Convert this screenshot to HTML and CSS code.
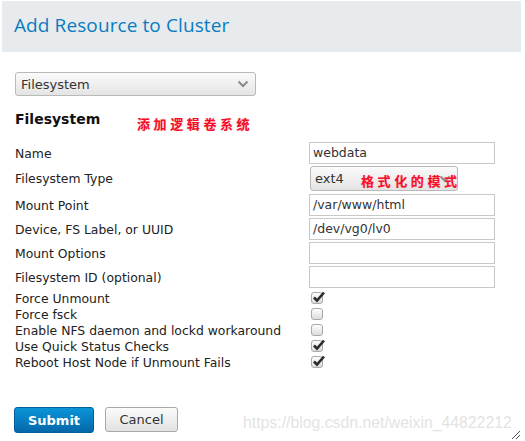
FILE: index.html
```html
<!DOCTYPE html>
<html>
<head>
<meta charset="utf-8">
<link rel="stylesheet" href="styles.css">
</head>
<body>
<div class="header"><h1 class="title">Add Resource to Cluster</h1></div>
<div class="content">
  <div class="select type-select">
    <span>Filesystem</span>
    <svg class="chev" width="12" height="8" viewBox="0 0 12 8"><path d="M1.5 1.5 L6 6 L10.5 1.5" fill="none" stroke="#8a8a8a" stroke-width="2"/></svg>
  </div>
  <div class="section">
    <h2 class="section-title">Filesystem</h2>
    <span class="note note1">添加逻辑卷系统</span>
  </div>
  <div class="form">
    <div class="row"><label>Name</label><div class="input">webdata</div></div>
    <div class="row row-select"><label>Filesystem Type</label>
      <div class="select fs-select"><span>ext4</span>
        <svg class="chev" width="12" height="8" viewBox="0 0 12 8"><path d="M1.5 1.5 L6 6 L10.5 1.5" fill="none" stroke="#8a8a8a" stroke-width="2"/></svg>
        <span class="note note2">格式化的模式</span>
      </div>
    </div>
    <div class="row"><label>Mount Point</label><div class="input">/var/www/html</div></div>
    <div class="row"><label>Device, FS Label, or UUID</label><div class="input">/dev/vg0/lv0</div></div>
    <div class="row"><label>Mount Options</label><div class="input"></div></div>
    <div class="row"><label>Filesystem ID (optional)</label><div class="input"></div></div>
    <div class="crow"><label>Force Unmount</label><span class="cb checked"><svg width="16" height="16" viewBox="0 0 16 16"><path d="M3 7.5 L6 10.5 L13 2.5" fill="none" stroke="#2b2b2b" stroke-width="2.6"/></svg></span></div>
    <div class="crow"><label>Force fsck</label><span class="cb"></span></div>
    <div class="crow"><label>Enable NFS daemon and lockd workaround</label><span class="cb"></span></div>
    <div class="crow"><label>Use Quick Status Checks</label><span class="cb checked"><svg width="16" height="16" viewBox="0 0 16 16"><path d="M3 7.5 L6 10.5 L13 2.5" fill="none" stroke="#2b2b2b" stroke-width="2.6"/></svg></span></div>
    <div class="crow"><label>Reboot Host Node if Unmount Fails</label><span class="cb checked"><svg width="16" height="16" viewBox="0 0 16 16"><path d="M3 7.5 L6 10.5 L13 2.5" fill="none" stroke="#2b2b2b" stroke-width="2.6"/></svg></span></div>
  </div>
  <div class="actions">
    <button class="btn submit">Submit</button>
    <button class="btn cancel">Cancel</button>
  </div>
</div>
<div class="watermark">https://blog.csdn.net/weixin_44822212</div>
<svg class="grip" width="12" height="12" viewBox="0 0 12 12"><path d="M11 3 L3 11 M11 7 L7 11" stroke="#555" stroke-width="1"/></svg>
</body>
</html>
```
FILE: styles.css
```css
html, body {
  margin: 0;
  padding: 0;
  background: #fff;
  font-family: "DejaVu Sans", sans-serif;
  color: #222;
}
body {
  position: relative;
  width: 525px;
  height: 441px;
  overflow: hidden;
}
.header {
  margin: 1px 4px 0 2px;
  height: 51px;
  background: #e8ebee;
  display: flex;
  align-items: center;
}
.title {
  margin: 0 0 3px 12px;
  font-family: "Open Sans", sans-serif;
  font-weight: 500;
  font-size: 19px;
  color: #0b7bc0;
  letter-spacing: 0.1px;
}
.content {
  padding-left: 15px;
}
.select {
  position: relative;
  box-sizing: border-box;
  border: 1px solid #b9b9b9;
  border-radius: 3px;
  background: linear-gradient(#fbfbfb, #e4e4e4);
  display: flex;
  align-items: center;
  font-size: 13px;
  color: #333;
}
.select .chev {
  position: absolute;
  right: 6px;
  top: 50%;
  margin-top: -4px;
}
.type-select {
  margin-top: 20px;
  width: 241px;
  height: 24px;
  padding-left: 5px;
}
.section {
  position: relative;
  margin-top: 14px;
  height: 18px;
}
.section-title {
  margin: 0;
  font-size: 14px;
  font-weight: bold;
  color: #111;
  line-height: 18px;
}
.note {
  position: absolute;
  font-family: "Noto Sans CJK SC", sans-serif;
  font-weight: bold;
  font-size: 13px;
  color: #f5102a;
  letter-spacing: 3.6px;
  white-space: nowrap;
  text-shadow: 0 0 1px #ff9aa8;
}
.note1 {
  left: 122px;
  top: 4px;
}
.note2 {
  left: 50px;
  top: 4px;
}
.form {
  margin-top: 14px;
}
.row {
  display: grid;
  grid-template-columns: 294px 186px;
  align-items: center;
  height: 22px;
  margin-bottom: 2px;
}
.row-select {
  height: 26px;
}
.row-select label {
  align-self: center;
  margin-bottom: 1px;
}
.row-select .fs-select {
  align-self: start;
}
label {
  font-size: 12.4px;
  color: #222;
}
.input {
  box-sizing: border-box;
  height: 22px;
  border: 1px solid #c8c8c8;
  padding-left: 3px;
  font-size: 12.5px;
  line-height: 20px;
  color: #333;
}
.fs-select {
  margin-left: 1px;
  width: 148px;
  height: 25px;
  padding-left: 4px;
  font-size: 13px;
}
.crow {
  display: grid;
  grid-template-columns: 296px 20px;
  align-items: center;
  height: 16px;
}
.cb {
  position: relative;
  box-sizing: border-box;
  width: 12px;
  height: 12px;
  border: 1px solid #a9a9a9;
  border-radius: 3px;
  background: linear-gradient(#fdfdfd, #dcdcdc);
}
.cb svg {
  position: absolute;
  left: -1px;
  top: -3px;
}
.actions {
  margin-top: 37px;
  margin-left: -1px;
  display: flex;
  gap: 11px;
  align-items: flex-start;
}
.btn {
  box-sizing: border-box;
  height: 26px;
  border-radius: 3px;
  font-family: "DejaVu Sans", sans-serif;
  font-size: 13px;
  padding: 0;
}
.submit {
  width: 80px;
  border: 1px solid #03609c;
  background: linear-gradient(#0b95d8, #0468aa);
  color: #fff;
  font-weight: bold;
}
.cancel {
  width: 73px;
  height: 25px;
  border: 1px solid #a8a8a8;
  background: linear-gradient(#fbfbfb, #e2e2e2);
  color: #333;
}
.watermark {
  position: absolute;
  left: 243px;
  top: 414px;
  font-family: "Liberation Sans", sans-serif;
  font-size: 15.8px;
  color: #e3e3e3;
  white-space: nowrap;
}
.grip {
  position: absolute;
  right: 4px;
  bottom: 1px;
}
```
